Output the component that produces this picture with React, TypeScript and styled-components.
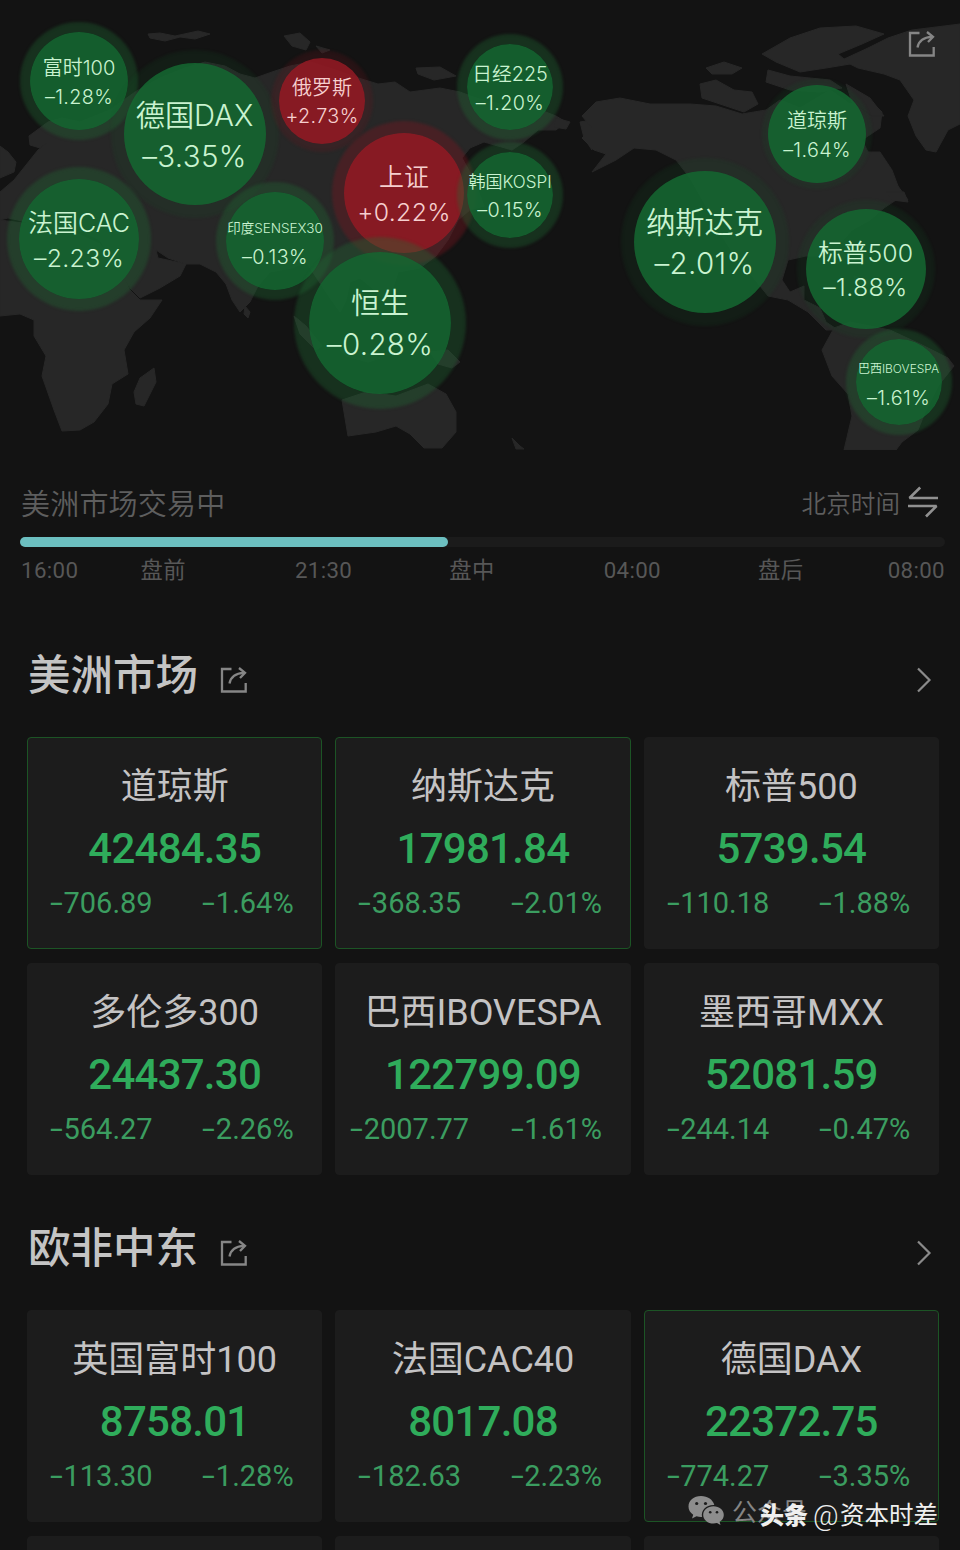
import React from 'react';
import styled, { createGlobalStyle } from 'styled-components';

const Global = createGlobalStyle`
  * { box-sizing: border-box; }
  body { margin: 0; background: #131313; }
`;

const LATIN_UI = "Inter, 'Noto Sans CJK SC', sans-serif";
const LATIN_NUM = "Roboto, 'Noto Sans CJK SC', sans-serif";

const Page = styled.main`
  position: relative;
  width: 960px;
  height: 1550px;
  overflow: hidden;
  background: #131313;
  color: #c4c3c4;
  font-family: ${LATIN_NUM};
`;

const MapPanel = styled.section`
  position: relative;
  height: 450px;
`;

const MapArt = styled.svg`
  display: block;
  width: 960px;
  height: 450px;
`;

type Tone = 'up' | 'down';

const Bubble = styled.div<{ $x: number; $y: number; $r: number; $ring: number; $faint?: boolean; $tone: Tone }>`
  position: absolute;
  left: ${(p) => p.$x - p.$r}px;
  top: ${(p) => p.$y - p.$r}px;
  width: ${(p) => p.$r * 2}px;
  height: ${(p) => p.$r * 2}px;
  border-radius: 50%;
  display: flex;
  flex-direction: column;
  align-items: center;
  justify-content: center;
  padding-top: 3.5px;
  white-space: nowrap;
  font-family: ${LATIN_UI};
  font-weight: 350;
  color: ${(p) => (p.$tone === 'up' ? '#f6cfcf' : '#c9f3d0')};
  background: ${(p) => (p.$tone === 'up' ? 'rgba(146, 26, 36, 0.9)' : 'rgba(20, 104, 49, 0.88)')};
  box-shadow: 0 0 3px ${(p) => p.$ring - p.$r}px
    ${(p) =>
      p.$tone === 'up'
        ? p.$faint ? 'rgba(120, 20, 30, 0.2)' : 'rgba(130, 22, 34, 0.36)'
        : p.$faint ? 'rgba(20, 90, 40, 0.14)' : 'rgba(32, 108, 52, 0.34)'};
`;

const BubbleLine = styled.span<{ $size: number; $line: number; $track?: number }>`
  font-size: ${(p) => p.$size}px;
  line-height: ${(p) => p.$line}px;
  letter-spacing: ${(p) => p.$track ?? 0}px;
`;

const MapShare = styled.div`
  position: absolute;
  left: 908px;
  top: 30px;
  display: flex;
`;

const Session = styled.section`
  display: flex;
  flex-direction: column;
  padding: 30px 15px 0 20px;
  color: #5e5e5e;
`;

const SessionHead = styled.div`
  display: flex;
  justify-content: space-between;
  align-items: center;
  height: 43px;
  padding: 0 6px 0 1px;
`;

const SessionName = styled.span`
  font-size: 29px;
  font-weight: 350;
  letter-spacing: 0.2px;
`;

const Zone = styled.span`
  display: flex;
  align-items: center;
  gap: 7px;
  font-size: 24.6px;
  font-weight: 350;
`;

const Track = styled.div`
  height: 10px;
  margin-top: 14px;
  border-radius: 5px;
  background: #1b1b1b;
`;

const Fill = styled.div`
  width: 428px;
  height: 10px;
  border-radius: 5px;
  background: #6cbfc0;
`;

const Times = styled.div`
  display: grid;
  grid-template-columns: 119.5px repeat(4, 154.4px) 1fr auto;
  height: 28px;
  margin-top: 9px;
  padding-left: 1px;
  font-size: 22.3px;
  letter-spacing: 0.35px;
  line-height: 28px;
  font-weight: 400;
  color: #575757;
`;

const Market = styled.section<{ $top: number }>`
  padding: ${(p) => p.$top}px 21px 0 27px;
`;

const MarketHead = styled.header`
  display: flex;
  align-items: center;
  height: 60px;
  margin-bottom: 33px;
`;

const MarketTitle = styled.h2`
  margin: 0 22px 0 1px;
  padding-top: 3px;
  font-size: 42.5px;
  line-height: 60px;
  font-weight: 500;
  color: #c4c4c4;
`;

const HeadIcon = styled.span<{ $push?: boolean }>`
  display: flex;
  margin-top: 12px;
  margin-left: ${(p) => (p.$push ? 'auto' : '0')};
  margin-right: ${(p) => (p.$push ? '7px' : '0')};
`;

const Grid = styled.div`
  display: grid;
  grid-template-columns: repeat(3, minmax(0, 1fr));
  gap: 14px 13px;
`;

const Card = styled.article<{ $hot?: boolean }>`
  height: 212px;
  border-radius: 4px;
  border: 1.5px solid ${(p) => (p.$hot ? '#1c5425' : '#1c1c1c')};
  background: #1c1c1c;
  display: flex;
  flex-direction: column;
  align-items: center;
  padding-top: 24px;
  white-space: nowrap;
`;

const CardName = styled.div`
  font-size: 36px;
  line-height: 50px;
`;

const Price = styled.div`
  margin-top: 9px;
  font-size: 42px;
  line-height: 56px;
  letter-spacing: -0.75px;
  font-weight: 500;
  color: #2fac5b;
`;

const Deltas = styled.div`
  display: grid;
  grid-template-columns: 1fr 1fr;
  width: 100%;
  margin-top: 6px;
  font-size: 29px;
  line-height: 40px;
  text-align: center;
  color: #3b9d60;
`;

const Sign = styled.span`
  display: inline-block;
  margin-right: 5.5px;
  transform: scaleX(1.6);
  transform-origin: left;
`;

const Watermark = styled.div`
  position: absolute;
  left: 688px;
  top: 1492px;
  display: flex;
  align-items: center;
  gap: 7px;
  height: 36px;
  font-size: 25px;
  color: #858585;
`;

const Credit = styled.div`
  position: absolute;
  left: 760px;
  top: 1498px;
  display: flex;
  height: 36px;
  line-height: 36px;
  font-size: 24px;
  color: #efefef;
  white-space: nowrap;
`;

const CreditBrand = styled.b`
  margin-right: 5px;
  font-weight: 900;
`;

const CreditAt = styled.span`
  width: 27px;
  font-size: 28px;
  font-weight: 300;
`;

const CreditName = styled.span`
  font-size: 24.5px;
`;

const ShareIcon = ({ size = 28, color = '#868686' }: { size?: number; color?: string }) => (
  <svg width={size} height={size} viewBox="0 0 28 28" fill="none" stroke={color} strokeWidth="2.3">
    <path d="M11.500 3H2V25.500H25.700V17" />
    <path d="M9.500 17.500C10.500 11.500 14 7.300 24 6.800" />
    <path d="M19 2L25 6.800L20 12" />
  </svg>
);

const SwapIcon = () => (
  <svg width="32" height="32" viewBox="0 0 32 32" fill="none" stroke="#909090" strokeWidth="2.600" strokeLinejoin="bevel">
    <path d="M13.200 1.500L2.500 12H31" />
    <path d="M1 20H29.500L19 30.500" />
  </svg>
);

const Chevron = () => (
  <svg width="16" height="26" viewBox="0 0 16 26" fill="none" stroke="#8a8a8a" strokeWidth="2.200">
    <path d="M2 1.500L13.500 13L2 24.500" />
  </svg>
);

const WeChat = () => (
  <svg width="37" height="31" viewBox="0 0 37 31">
    <path fill="#8d8d8d" d="M13 1C5.800 1 .5 5.600.5 11.500c0 3.400 1.800 6.300 4.700 8.200L4 23.500l4.500-2.200c1.500.4 3 .6 4.500.6h1C12.800 15.500 18 10 25.500 10h.8C25 4.800 19.700 1 13 1z" />
    <path fill="#8d8d8d" d="M25.500 11.300c-5.800 0-10.300 3.800-10.300 8.600s4.500 8.600 10.300 8.600c1.200 0 2.400-.2 3.500-.5l3.500 2-.9-3.200c2.600-1.600 4.200-4 4.200-6.900 0-4.800-4.500-8.600-10.300-8.600z" />
    <g fill="#1c1c1c">
      <circle cx="8.700" cy="8.500" r="1.600" />
      <circle cx="17.500" cy="8.500" r="1.600" />
      <circle cx="22.200" cy="17.300" r="1.300" />
      <circle cx="29" cy="17.300" r="1.300" />
    </g>
  </svg>
);

const LAND = [
  // Eurasia
  'M0 192L14 180L22 170L30 160L38 150L48 142L40 148L30 145L29 136L48 122L62 118L80 122L110 110L135 92L160 78L185 68L205 62L225 66L240 74L255 78L272 72L290 66L310 62L335 70L352 76L378 84L395 82L410 92L440 88L460 92L476 98L500 104L530 106L556 116L566 122L556 130L538 130L524 142L512 150L498 146L484 142L470 148L462 158L470 172L478 190L484 206L470 210L458 220L448 240L436 256L420 268L398 272L392 290L384 300L372 288L360 278L350 282L346 300L340 312L330 298L318 280L306 262L292 268L270 272L258 286L250 302L240 312L232 300L226 284L216 272L200 264L186 264L168 258L156 250L158 258L186 264L180 276L160 288L140 298L130 288L122 276L112 262L100 240L84 232L60 226L40 226L18 220L8 218L0 220Z',
  // British Isles and the western coast
  'M0 146L8 152L16 162L14 172L0 178Z',
  // Africa
  'M0 220L30 224L60 226L100 244L120 272L130 290L140 300L162 300L150 318L134 332L124 350L128 374L112 384L108 404L94 422L80 430L62 431L54 410L42 376L46 356L34 336L34 320L20 314L0 316Z',
  // Madagascar
  'M154 368L156 382L144 406L136 404L134 392L140 378Z',
  // Sri Lanka
  'M245 306L250 312L248 318L244 314Z',
  // Novaya Zemlya and the Arctic islands
  'M148 34L160 33L175 36L198 31L210 34L195 39L180 37L165 41L150 38Z',
  'M284 36L300 33L310 42L306 50L292 46Z M316 46L330 50L322 53Z M416 68L440 67L456 76L434 80L418 74Z',
  // Bering Sea
  'M556 118L570 122L566 129L554 127Z M580 122L592 120L592 150L584 138Z',
  // Australia
  'M342 400L366 392L396 396L428 384L446 394L456 412L456 432L442 448L424 448L410 434L396 426L376 432L348 436Z',
  // New Zealand
  'M512 438L520 446L524 449L516 449Z',
  // Indonesia
  'M294 316L306 326L322 346L316 350L300 334Z M340 350L362 352L380 358L368 362L346 356Z M430 352L448 350L460 362L452 368L438 364Z',
  // North America
  'M582 116L596 102L620 98L650 104L690 104L716 106L742 114L766 110L780 100L800 108L830 90L850 104L866 96L882 112L880 128L862 140L868 152L880 152L892 170L898 186L908 200L896 200L884 208L870 220L852 230L838 246L846 256L838 264L826 256L806 256L788 260L782 280L790 292L804 286L804 300L820 308L826 322L838 330L826 330L808 312L788 300L768 296L752 276L736 258L722 236L706 206L690 178L676 160L656 150L634 148L616 160L592 172L606 154L594 150L582 138L592 128Z',
  // Canadian archipelago
  'M700 84L716 80L734 90L752 92L758 104L744 112L720 104L702 98Z M706 68L724 62L742 68L732 74L712 74Z M762 54L790 38L820 28L856 26L884 34L862 44L838 54L850 64L826 68L800 72L776 62Z M768 70L790 76L830 80L842 88L820 92L790 90L766 82Z M846 84L870 98L884 116L872 116L852 102Z',
  // Caribbean
  'M854 276L880 284L876 290L856 282Z M886 192L904 192L908 202L892 200Z',
  // Greenland
  'M842 60L868 48L888 38L912 30L960 24L960 124L948 130L936 152L926 150L916 136L908 116L914 100L900 80L884 74L858 68Z',
  // South America
  'M834 328L850 322L890 330L920 344L948 358L954 366L938 386L926 410L918 430L902 442L896 450L844 450L852 416L848 394L832 376L822 350Z',
];

type BubbleData = {
  name: string; value: string; x: number; y: number; r: number; ring: number;
  size: number; track?: number; tone?: Tone; faint?: boolean;
};

const BUBBLES: BubbleData[] = [
  { name: '富时100', value: '–1.28%', x: 79, y: 81, r: 49, ring: 59, size: 20 },
  { name: '德国DAX', value: '–3.35%', x: 194.5, y: 134, r: 71, ring: 84, size: 29.2, faint: true },
  { name: '法国CAC', value: '–2.23%', x: 79, y: 239, r: 60, ring: 72, size: 25 },
  { name: '俄罗斯', value: '+2.73%', x: 322, y: 100.5, r: 43, ring: 51, size: 20, tone: 'up', faint: true },
  { name: '上证', value: '+0.22%', x: 404, y: 193, r: 60, ring: 72, size: 25, tone: 'up' },
  { name: '日经225', value: '–1.20%', x: 510, y: 87, r: 43, ring: 53, size: 19.8 },
  { name: '韩国KOSPI', value: '–0.15%', x: 510, y: 194.5, r: 43, ring: 53, size: 17 },
  { name: '印度SENSEX30', value: '–0.13%', x: 275, y: 241, r: 49, ring: 59, size: 13.5 },
  { name: '恒生', value: '–0.28%', x: 380, y: 322.5, r: 71, ring: 86, size: 29 },
  { name: '道琼斯', value: '–1.64%', x: 817, y: 134, r: 49, ring: 55, size: 20, faint: true },
  { name: '纳斯达克', value: '–2.01%', x: 704.5, y: 241.5, r: 71, ring: 84, size: 29.2, faint: true },
  { name: '标普500', value: '–1.88%', x: 865.5, y: 268.5, r: 60, ring: 69, size: 24.8, faint: true },
  { name: '巴西IBOVESPA', value: '–1.61%', x: 898.5, y: 382, r: 43, ring: 53, size: 12 },
];

const VALUE_SIZE = (r: number) => (r > 65 ? 29.5 : r > 55 ? 24.8 : 19.8);
const LINE = (r: number) => (r > 65 ? 41 : r > 55 ? 34.5 : 28.5);

type Quote = { name: string; price: string; diff: string; pct: string; hot?: boolean };

const AMERICAS: Quote[] = [
  { name: '道琼斯', price: '42484.35', diff: '-706.89', pct: '-1.64%', hot: true },
  { name: '纳斯达克', price: '17981.84', diff: '-368.35', pct: '-2.01%', hot: true },
  { name: '标普500', price: '5739.54', diff: '-110.18', pct: '-1.88%' },
  { name: '多伦多300', price: '24437.30', diff: '-564.27', pct: '-2.26%' },
  { name: '巴西IBOVESPA', price: '122799.09', diff: '-2007.77', pct: '-1.61%' },
  { name: '墨西哥MXX', price: '52081.59', diff: '-244.14', pct: '-0.47%' },
];

const EMEA: Quote[] = [
  { name: '英国富时100', price: '8758.01', diff: '-113.30', pct: '-1.28%' },
  { name: '法国CAC40', price: '8017.08', diff: '-182.63', pct: '-2.23%' },
  { name: '德国DAX', price: '22372.75', diff: '-774.27', pct: '-3.35%', hot: true },
];

const Change = ({ text }: { text: string }) => (
  <span><Sign>{text[0]}</Sign>{text.slice(1)}</span>
);

const MarketSection = ({ title, quotes, top, spare = 0 }: { title: string; quotes: Quote[]; top: number; spare?: number }) => (
  <Market $top={top}>
    <MarketHead>
      <MarketTitle>{title}</MarketTitle>
      <HeadIcon><ShareIcon /></HeadIcon>
      <HeadIcon $push><Chevron /></HeadIcon>
    </MarketHead>
    <Grid>
      {quotes.map((q) => (
        <Card key={q.name} $hot={q.hot}>
          <CardName>{q.name}</CardName>
          <Price>{q.price}</Price>
          <Deltas>
            <Change text={q.diff} />
            <Change text={q.pct} />
          </Deltas>
        </Card>
      ))}
      {Array.from({ length: spare }, (_, i) => <Card key={i} />)}
    </Grid>
  </Market>
);

export default function App() {
  return (
    <Page>
      <Global />
      <MapPanel>
        <MapArt viewBox="0 0 960 450">
          {LAND.map((d) => <path key={d} d={d} fill="#272727" stroke="#272727" strokeLinejoin="round" />)}
        </MapArt>
        {BUBBLES.map((b) => (
          <Bubble key={b.name} $x={b.x} $y={b.y} $r={b.r} $ring={b.ring} $faint={b.faint} $tone={b.tone ?? 'down'}>
            <BubbleLine $size={b.size} $line={LINE(b.r)} $track={b.track}>{b.name}</BubbleLine>
            <BubbleLine $size={VALUE_SIZE(b.r)} $line={LINE(b.r)} $track={0.35}>{b.value}</BubbleLine>
          </Bubble>
        ))}
        <MapShare><ShareIcon /></MapShare>
      </MapPanel>
      <Session>
        <SessionHead>
          <SessionName>美洲市场交易中</SessionName>
          <Zone>北京时间<SwapIcon /></Zone>
        </SessionHead>
        <Track><Fill /></Track>
        <Times>
          <span>16:00</span><span>盘前</span><span>21:30</span><span>盘中</span><span>04:00</span><span>盘后</span><span>08:00</span>
        </Times>
      </Session>
      <MarketSection title="美洲市场" quotes={AMERICAS} top={60} />
      <MarketSection title="欧非中东" quotes={EMEA} top={42} spare={3} />
      <Watermark><WeChat />公众号</Watermark>
      <Credit><CreditBrand>头条</CreditBrand><CreditAt>@</CreditAt><CreditName>资本时差</CreditName></Credit>
    </Page>
  );
}
